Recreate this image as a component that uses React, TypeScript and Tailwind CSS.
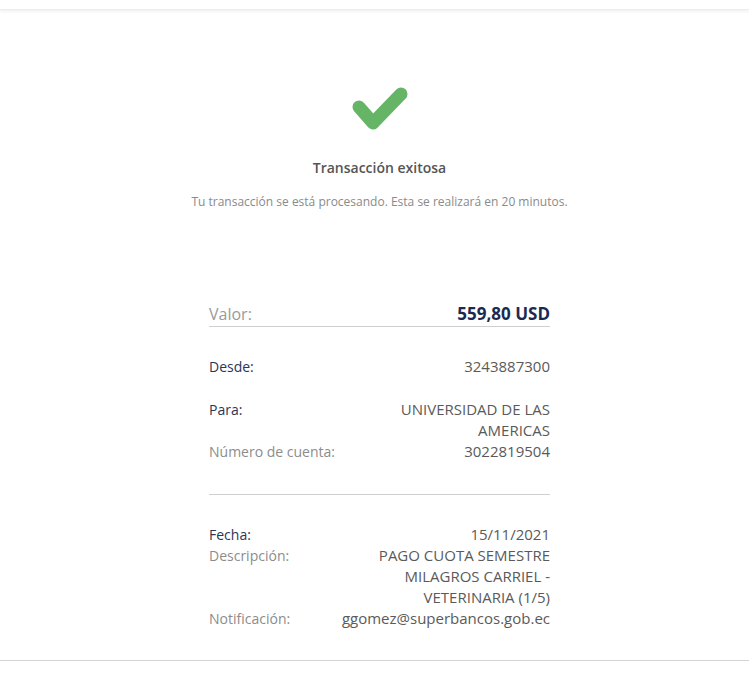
import React from "react";

const font = { fontFamily: "'Open Sans', Lato, sans-serif" };

function Row({
  label,
  value,
  labelClass = "text-[#8c8c8c]",
}: {
  label: string;
  value: React.ReactNode;
  labelClass?: string;
}) {
  return (
    <div className="flex justify-between text-[14px] leading-[21px]">
      <span className={labelClass}>{label}</span>
      <span className="text-right text-[15px] text-[#5a5a5a]">{value}</span>
    </div>
  );
}

export default function App() {
  return (
    <div className="min-h-[676px] w-[749px] bg-white" style={font}>
      <div className="h-[10px] border-b border-[#ececec] shadow-[0_2px_3px_rgba(0,0,0,0.05)]" />

      <div className="pl-[10px]">
        <div className="flex flex-col items-center pt-[74px]">
          <svg width="62" height="50" viewBox="0 0 62 50">
            <path
              d="M10 23 L24 39 L52 10"
              fill="none"
              stroke="#66b567"
              strokeWidth="13"
              strokeLinecap="round"
              strokeLinejoin="round"
            />
          </svg>
          <h1 className="mt-[25px] text-[14px] font-semibold leading-[18px] text-[#555]">
            Transacción exitosa
          </h1>
          <p className="mt-[17px] text-[12px] leading-[16px] text-[#8a8a8a]">
            Tu transacción se está procesando. Esta se realizará en 20 minutos.
          </p>
        </div>

        <div className="mx-auto mt-[93px] w-[341px]">
          <div className="flex items-end justify-between border-b border-[#cfcfcf] pb-[1px]">
            <span className="text-[16px] leading-[22px] text-[#9a9a9a]">Valor:</span>
            <span className="text-[17px] font-bold leading-[22px] text-[#1c2a50]">
              559,80 USD
            </span>
          </div>

          <div className="mt-[29px]">
            <Row label="Desde:" value="3243887300" labelClass="text-[#2a3658]" />
          </div>

          <div className="mt-[22px]">
            <Row
              label="Para:"
              value={
                <>
                  UNIVERSIDAD DE LAS
                  <br />
                  AMERICAS
                </>
              }
              labelClass="text-[#2a3658]"
            />
            <Row label="Número de cuenta:" value="3022819504" />
          </div>

          <div className="mt-[32px] border-t border-[#cfcfcf]" />

          <div className="mt-[29px]">
            <Row label="Fecha:" value="15/11/2021" labelClass="text-[#2a3658]" />
            <Row
              label="Descripción:"
              value={
                <>
                  PAGO CUOTA SEMESTRE
                  <br />
                  MILAGROS CARRIEL -
                  <br />
                  VETERINARIA (1/5)
                </>
              }
            />
            <Row label="Notificación:" value="ggomez@superbancos.gob.ec" />
          </div>
        </div>
      </div>

      <div className="mt-[31px] border-t border-[#d4d4d4]" />
    </div>
  );
}
